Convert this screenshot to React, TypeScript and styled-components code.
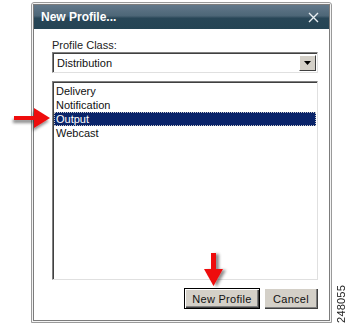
import styled, { createGlobalStyle } from 'styled-components';

const GlobalStyle = createGlobalStyle`
  html, body {
    margin: 0;
    padding: 0;
    background: #ffffff;
  }
  body {
    font-family: "Liberation Sans", Arial, sans-serif;
  }
`;

const Page = styled.div`
  position: relative;
  width: 347px;
  height: 325px;
  display: flex;
  align-items: flex-start;
  overflow: hidden;
`;

const Dialog = styled.div`
  margin: 2px 0 0 31px;
  width: 302px;
  height: 321px;
  box-sizing: border-box;
  border: 1px solid #9a9a9a;
  border-radius: 3px 3px 0 0;
  padding: 1px;
  background: #f4f4f4;
  display: flex;
  flex-direction: column;
`;

const Inner = styled.div`
  flex: 1;
  display: flex;
  flex-direction: column;
  border: 1px solid #7c7c7c;
  background: #ffffff;
`;

const TitleBar = styled.div`
  height: 24px;
  display: flex;
  align-items: center;
  justify-content: space-between;
  padding: 0 10px 0 7px;
  background: linear-gradient(#62788a 0%, #4d6677 45%, #284657 55%, #254454 100%);
  color: #ffffff;
  font-weight: bold;
  font-size: 12px;
`;

const Body = styled.div`
  flex: 1;
  display: flex;
  flex-direction: column;
  padding: 10px 11px 11px 18px;
`;

const Label = styled.div`
  font-size: 11px;
  color: #222222;
  line-height: 13px;
`;

const Select = styled.div`
  height: 21px;
  box-sizing: border-box;
  display: flex;
  align-items: center;
  justify-content: space-between;
  border-top: 1px solid #808080;
  border-left: 1px solid #808080;
  border-right: 1px solid #e0e0e0;
  border-bottom: 1px solid #e0e0e0;
  box-shadow: inset 1px 1px 0 #404040;
  padding: 0 1px 0 4px;
  font-size: 11px;
  color: #111111;
`;

const DropButton = styled.div`
  width: 17px;
  height: 16px;
  box-sizing: border-box;
  display: flex;
  align-items: center;
  justify-content: center;
  background: #d4d0c8;
  border-top: 1px solid #ffffff;
  border-left: 1px solid #ffffff;
  border-right: 1px solid #404040;
  border-bottom: 1px solid #404040;
`;

const List = styled.div`
  margin-top: 8px;
  height: 199px;
  box-sizing: border-box;
  border-top: 1px solid #808080;
  border-left: 1px solid #808080;
  border-right: 1px solid #e0e0e0;
  border-bottom: 1px solid #e0e0e0;
  box-shadow: inset 1px 1px 0 #404040;
  padding: 2px 1px;
  display: flex;
  flex-direction: column;
`;

const Item = styled.div<{ selected?: boolean }>`
  height: 14px;
  line-height: 14px;
  padding-left: 2px;
  font-size: 11px;
  box-sizing: border-box;
  color: ${({ selected }) => (selected ? '#ffffff' : '#111111')};
  background: ${({ selected }) => (selected ? '#0a246a' : 'transparent')};
  outline: ${({ selected }) => (selected ? '1px dotted #c8c8c8' : 'none')};
  outline-offset: -1px;
`;

const Buttons = styled.div`
  margin-top: auto;
  display: flex;
  justify-content: flex-end;
  gap: 4px;
`;

const Button = styled.div<{ primary?: boolean }>`
  width: ${({ primary }) => (primary ? '76px' : '54px')};
  height: 21px;
  box-sizing: border-box;
  display: flex;
  align-items: center;
  justify-content: center;
  font-size: 11px;
  letter-spacing: 0.3px;
  color: #111111;
  background: #d4d0c8;
  border: ${({ primary }) => (primary ? '1px solid #000000' : 'none')};
  box-shadow: inset 1px 1px 0 #ffffff, inset -1px -1px 0 #404040, inset -2px -2px 0 #808080;
`;

const Caption = styled.div`
  align-self: flex-end;
  margin: 0 0 2px 3px;
  writing-mode: vertical-rl;
  transform: rotate(180deg);
  font-size: 11px;
  letter-spacing: 0.2px;
  color: #222222;
`;

const Arrow = styled.svg`
  position: absolute;
  overflow: visible;
`;

function RightArrow() {
  return (
    <Arrow width="40" height="24" viewBox="0 0 40 24" style={{ left: 12, top: 107 }}>
      <defs>
        <filter id="sh1" x="-30%" y="-50%" width="160%" height="200%">
          <feDropShadow dx="-1" dy="3" stdDeviation="1.6" floodColor="#000" floodOpacity="0.45" />
        </filter>
      </defs>
      <path d="M2 9 H22 V1 L38 11 L22 21 V13 H2 Z" fill="#ee1111" filter="url(#sh1)" />
    </Arrow>
  );
}

function DownArrow() {
  return (
    <Arrow width="24" height="36" viewBox="0 0 24 36" style={{ left: 202, top: 252 }}>
      <defs>
        <filter id="sh2" x="-50%" y="-30%" width="200%" height="160%">
          <feDropShadow dx="3" dy="1" stdDeviation="1.6" floodColor="#000" floodOpacity="0.45" />
        </filter>
      </defs>
      <path d="M9 1 H14 V17 H21 L11.5 34 L2 17 H9 Z" fill="#ee1111" filter="url(#sh2)" />
    </Arrow>
  );
}

function CloseIcon() {
  return (
    <svg width="11" height="11" viewBox="0 0 11 11">
      <path d="M1 1 L10 10 M10 1 L1 10" stroke="#e8eef2" strokeWidth="1.4" />
    </svg>
  );
}

function DropTriangle() {
  return (
    <svg width="7" height="4" viewBox="0 0 7 4">
      <path d="M0 0 H7 L3.5 4 Z" fill="#000000" />
    </svg>
  );
}

export default function App() {
  return (
    <>
      <GlobalStyle />
      <Page>
        <Dialog>
          <Inner>
            <TitleBar>
              <span>New Profile...</span>
              <CloseIcon />
            </TitleBar>
            <Body>
              <Label>Profile Class:</Label>
              <Select>
                <span>Distribution</span>
                <DropButton>
                  <DropTriangle />
                </DropButton>
              </Select>
              <List>
                <Item>Delivery</Item>
                <Item>Notification</Item>
                <Item selected>Output</Item>
                <Item>Webcast</Item>
              </List>
              <Buttons>
                <Button primary>New Profile</Button>
                <Button>Cancel</Button>
              </Buttons>
            </Body>
          </Inner>
        </Dialog>
        <Caption>248055</Caption>
        <RightArrow />
        <DownArrow />
      </Page>
    </>
  );
}
